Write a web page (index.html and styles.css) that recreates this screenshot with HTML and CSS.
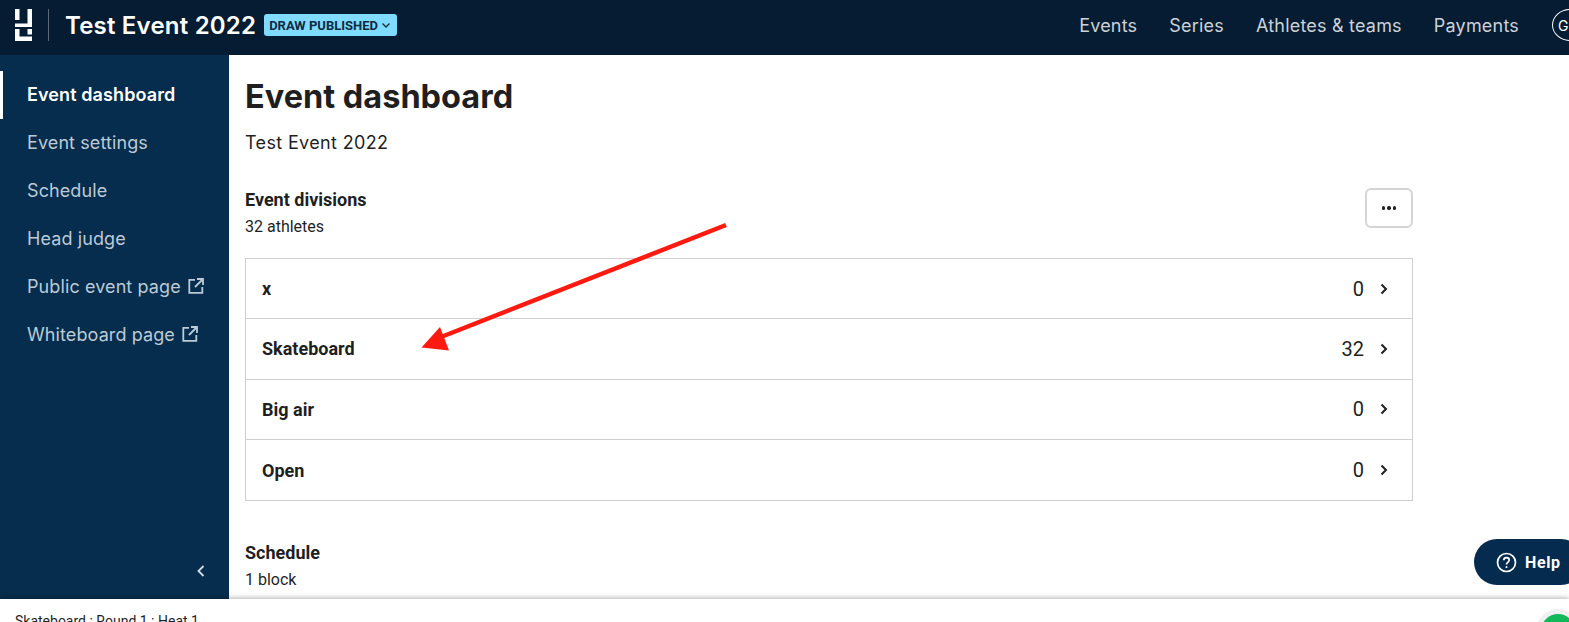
FILE: index.html
```html
<!DOCTYPE html>
<html lang="en">
<head>
    <meta charset="UTF-8">
    <meta name="viewport" content="width=device-width, initial-scale=1.0">
    <title>Event dashboard</title>
    <link rel="stylesheet" href="styles.css">
</head>
<body>

<header class="topbar">
    <div class="brand">
        <svg class="logo" width="17" height="32" viewBox="0 0 17 32" fill="#fff">
            <rect x="0" y="0" width="4.500" height="11"/>
            <rect x="12.500" y="0" width="4.500" height="18"/>
            <rect x="0" y="14.500" width="17" height="3.500"/>
            <rect x="0" y="20" width="4.500" height="12"/>
            <rect x="0" y="27.500" width="17" height="4.500"/>
            <rect x="12.500" y="20" width="4.500" height="5.500"/>
        </svg>
        <span class="brand-sep"></span>
        <span class="event-name">Test Event 2022</span>
        <span class="status-pill">DRAW PUBLISHED
            <svg width="10" height="10" viewBox="0 0 10 10" fill="none" stroke="#0f2a3f" stroke-width="1.3"><path d="M1.500 3.500 5 7l3.500-3.500"/></svg>
        </span>
    </div>
    <nav class="topnav">
        <a>Events</a>
        <a>Series</a>
        <a>Athletes &amp; teams</a>
        <a>Payments</a>
        <span class="avatar">GI</span>
    </nav>
</header>

<div class="main">
    <aside class="sidebar">
        <ul class="sidemenu">
            <li class="active">Event dashboard</li>
            <li>Event settings</li>
            <li>Schedule</li>
            <li>Head judge</li>
            <li>Public event page
                <svg class="ext" width="16" height="16" viewBox="0 0 16 16" fill="none" stroke="currentColor" stroke-width="1.800"><path d="M7 1.800H1.300v13h13V9M9 1h6v6M15 1 7 9"/></svg>
            </li>
            <li>Whiteboard page
                <svg class="ext" width="16" height="16" viewBox="0 0 16 16" fill="none" stroke="currentColor" stroke-width="1.800"><path d="M7 1.800H1.300v13h13V9M9 1h6v6M15 1 7 9"/></svg>
            </li>
        </ul>
        <div class="collapse">
            <svg width="10" height="14" viewBox="0 0 10 14" fill="none" stroke="#d5dde4" stroke-width="1.800"><path d="M7.500 2 2.500 7l5 5"/></svg>
        </div>
    </aside>

    <section class="content">
        <h1>Event dashboard</h1>
        <p class="subtitle">Test Event 2022</p>

        <div class="section-head">
            <div>
                <h2>Event divisions</h2>
                <p class="count">32 athletes</p>
            </div>
            <button class="more"><span></span><span></span><span></span></button>
        </div>

        <div class="divisions">
            <div class="row"><b>x</b><span class="num">0</span><svg class="chev" width="8" height="12" viewBox="0 0 8 12" fill="none" stroke="#1f1f1f" stroke-width="2"><path d="M1.500 1.500 6 6l-4.500 4.500"/></svg></div>
            <div class="row"><b>Skateboard</b><span class="num">32</span><svg class="chev" width="8" height="12" viewBox="0 0 8 12" fill="none" stroke="#1f1f1f" stroke-width="2"><path d="M1.500 1.500 6 6l-4.500 4.500"/></svg></div>
            <div class="row"><b>Big air</b><span class="num">0</span><svg class="chev" width="8" height="12" viewBox="0 0 8 12" fill="none" stroke="#1f1f1f" stroke-width="2"><path d="M1.500 1.500 6 6l-4.500 4.500"/></svg></div>
            <div class="row"><b>Open</b><span class="num">0</span><svg class="chev" width="8" height="12" viewBox="0 0 8 12" fill="none" stroke="#1f1f1f" stroke-width="2"><path d="M1.500 1.500 6 6l-4.500 4.500"/></svg></div>
        </div>

        <h2 class="schedule-title">Schedule</h2>
        <p class="count">1 block</p>
    </section>
</div>

<footer class="footbar">
    <span>Skateboard : Round 1 : Heat 1</span>
    <span class="live-dot"></span>
</footer>

<div class="help">
    <svg width="21" height="21" viewBox="0 0 21 21" fill="none" stroke="#fff" stroke-width="1.700"><circle cx="10.500" cy="10.500" r="9"/><path d="M7.800 8.200c0-1.600 1.200-2.500 2.700-2.500s2.700 1 2.700 2.400c0 2.200-2.700 2.200-2.700 4.300"/><path d="M10.500 14.200v1.800"/></svg>
    <span>Help</span>
</div>

<!-- red annotation drawn over the screenshot -->
<svg class="annotation" width="1569" height="622" viewBox="0 0 1569 622">
    <path d="M726 225 436 339" stroke="#fe1a10" stroke-width="4.500" fill="none"/>
    <path d="M421.500 347.500 440 327 449 350.500Z" fill="#fe1a10"/>
</svg>

</body>
</html>
```

FILE: styles.css
```css
* {
    box-sizing: border-box;
}

html, body {
    height: 100%;
}

body {
    margin: 0;
    height: 622px;
    overflow: hidden;
    display: flex;
    flex-direction: column;
    font-family: Inter, "Liberation Sans", sans-serif;
    color: #1f1f1f;
    background: #fff;
}

/* top bar */
.topbar {
    height: 55px;
    flex: none;
    display: flex;
    align-items: center;
    justify-content: space-between;
    padding-bottom: 5px;
    background: #051c33;
    overflow: hidden;
}

.brand {
    display: flex;
    align-items: center;
    padding-left: 15px;
}

.logo {
    display: block;
}

.brand-sep {
    width: 1px;
    height: 32px;
    margin: 0 16px 0 16px;
    background: #5a6977;
}

.event-name {
    font-size: 24px;
    font-weight: 600;
    letter-spacing: 0.2px;
    color: #fff;
}

.status-pill {
    margin-left: 8px;
    height: 22px;
    padding: 0 6px 0 5px;
    display: flex;
    align-items: center;
    gap: 3px;
    background: #7fdcff;
    border-radius: 3px;
    font-family: Roboto, sans-serif;
    font-size: 13px;
    font-weight: 700;
    color: #0f2a3f;
    white-space: nowrap;
}

.topnav {
    display: flex;
    align-items: center;
    gap: 32px;
    margin-right: -18px;
    font-size: 18px;
    letter-spacing: 0.2px;
    color: #cdd2d7;
}

.avatar {
    width: 36px;
    height: 32px;
    margin-left: 1px;
    margin-right: -1px;
    border: 1px solid #fff;
    border-radius: 50%;
    display: flex;
    align-items: center;
    padding-left: 5px;
    color: #fff;
    font-size: 14px;
}

/* sidebar + content */
.main {
    flex: 1;
    min-height: 0;
    display: flex;
}

.sidebar {
    width: 229px;
    flex: none;
    display: flex;
    flex-direction: column;
    justify-content: space-between;
    padding-top: 16px;
    background: #062d4e;
}

.sidemenu {
    list-style: none;
    margin: 0;
    padding: 0;
}

.sidemenu li {
    height: 48px;
    padding-left: 27px;
    padding-bottom: 2px;
    display: flex;
    align-items: center;
    gap: 7px;
    font-size: 18px;
    letter-spacing: 0.1px;
    color: #bccad6;
}

.sidemenu li.active {
    color: #fff;
    font-weight: 600;
    border-left: 3px solid #fff;
    padding-left: 24px;
}

.collapse {
    height: 56px;
    padding-right: 23px;
    display: flex;
    align-items: center;
    justify-content: flex-end;
}

.content {
    flex: 1;
    min-width: 0;
    overflow: hidden;
    padding: 23px 156px 0 16px;
}

h1 {
    margin: 0;
    font-size: 32.5px;
    line-height: 38px;
    font-weight: 700;
    color: #1f1f1f;
}

.subtitle {
    margin: 15px 0 0;
    font-size: 18px;
    line-height: 24px;
    letter-spacing: 0.35px;
}

.section-head {
    margin-top: 33px;
    display: flex;
    justify-content: space-between;
    align-items: flex-start;
}

h2 {
    margin: 0;
    font-family: Roboto, sans-serif;
    font-size: 18px;
    line-height: 24px;
    font-weight: 700;
}

.count {
    margin: 3px 0 0;
    font-family: Roboto, sans-serif;
    font-size: 16px;
    line-height: 24px;
}

.more {
    width: 48px;
    height: 40px;
    padding: 0;
    display: flex;
    align-items: center;
    justify-content: center;
    gap: 2px;
    background: #fff;
    border: 2px solid #d4d4d4;
    border-radius: 6px;
}

.more span {
    width: 3.500px;
    height: 3.500px;
    border-radius: 50%;
    background: #1f1f1f;
}

.divisions {
    margin-top: 19px;
    border: 1px solid #cfcfcf;
}

.row {
    height: 60.5px;
    display: flex;
    align-items: center;
    padding: 0 24px 0 16px;
    border-top: 1px solid #cfcfcf;
    font-family: Roboto, sans-serif;
}

.row:first-child {
    height: 59px;
    border-top: 0;
}

.row:last-child {
    height: 61px;
}

.row b {
    flex: 1;
    font-size: 18px;
    font-weight: 700;
}

.num {
    font-size: 20px;
    margin-right: 16px;
}

.chev {
    display: block;
}

.schedule-title {
    margin-top: 40px;
}

/* bottom bar */
.footbar {
    height: 23px;
    flex: none;
    position: relative;
    z-index: 1;
    padding: 14px 0 0 15px;
    background: #fff;
    box-shadow: 0 -1px 5px rgba(0, 0, 0, 0.3);
    font-family: Roboto, sans-serif;
    font-size: 14px;
    line-height: 16px;
    white-space: nowrap;
    overflow: hidden;
}

.live-dot {
    position: absolute;
    left: 1541px;
    top: 15px;
    width: 34px;
    height: 34px;
    border-radius: 50%;
    background: #12b95a;
    box-shadow: 0 0 0 5px #f0f0f0;
}

.help {
    position: absolute;
    left: 1474px;
    top: 539px;
    width: 110px;
    height: 46px;
    padding-left: 22px;
    display: flex;
    align-items: center;
    gap: 8px;
    border-radius: 23px;
    background: #052c4f;
    color: #fff;
    font-family: Roboto, sans-serif;
    font-size: 16px;
    font-weight: 700;
    letter-spacing: 0.6px;
}

.annotation {
    position: absolute;
    left: 0;
    top: 0;
    pointer-events: none;
}
```
